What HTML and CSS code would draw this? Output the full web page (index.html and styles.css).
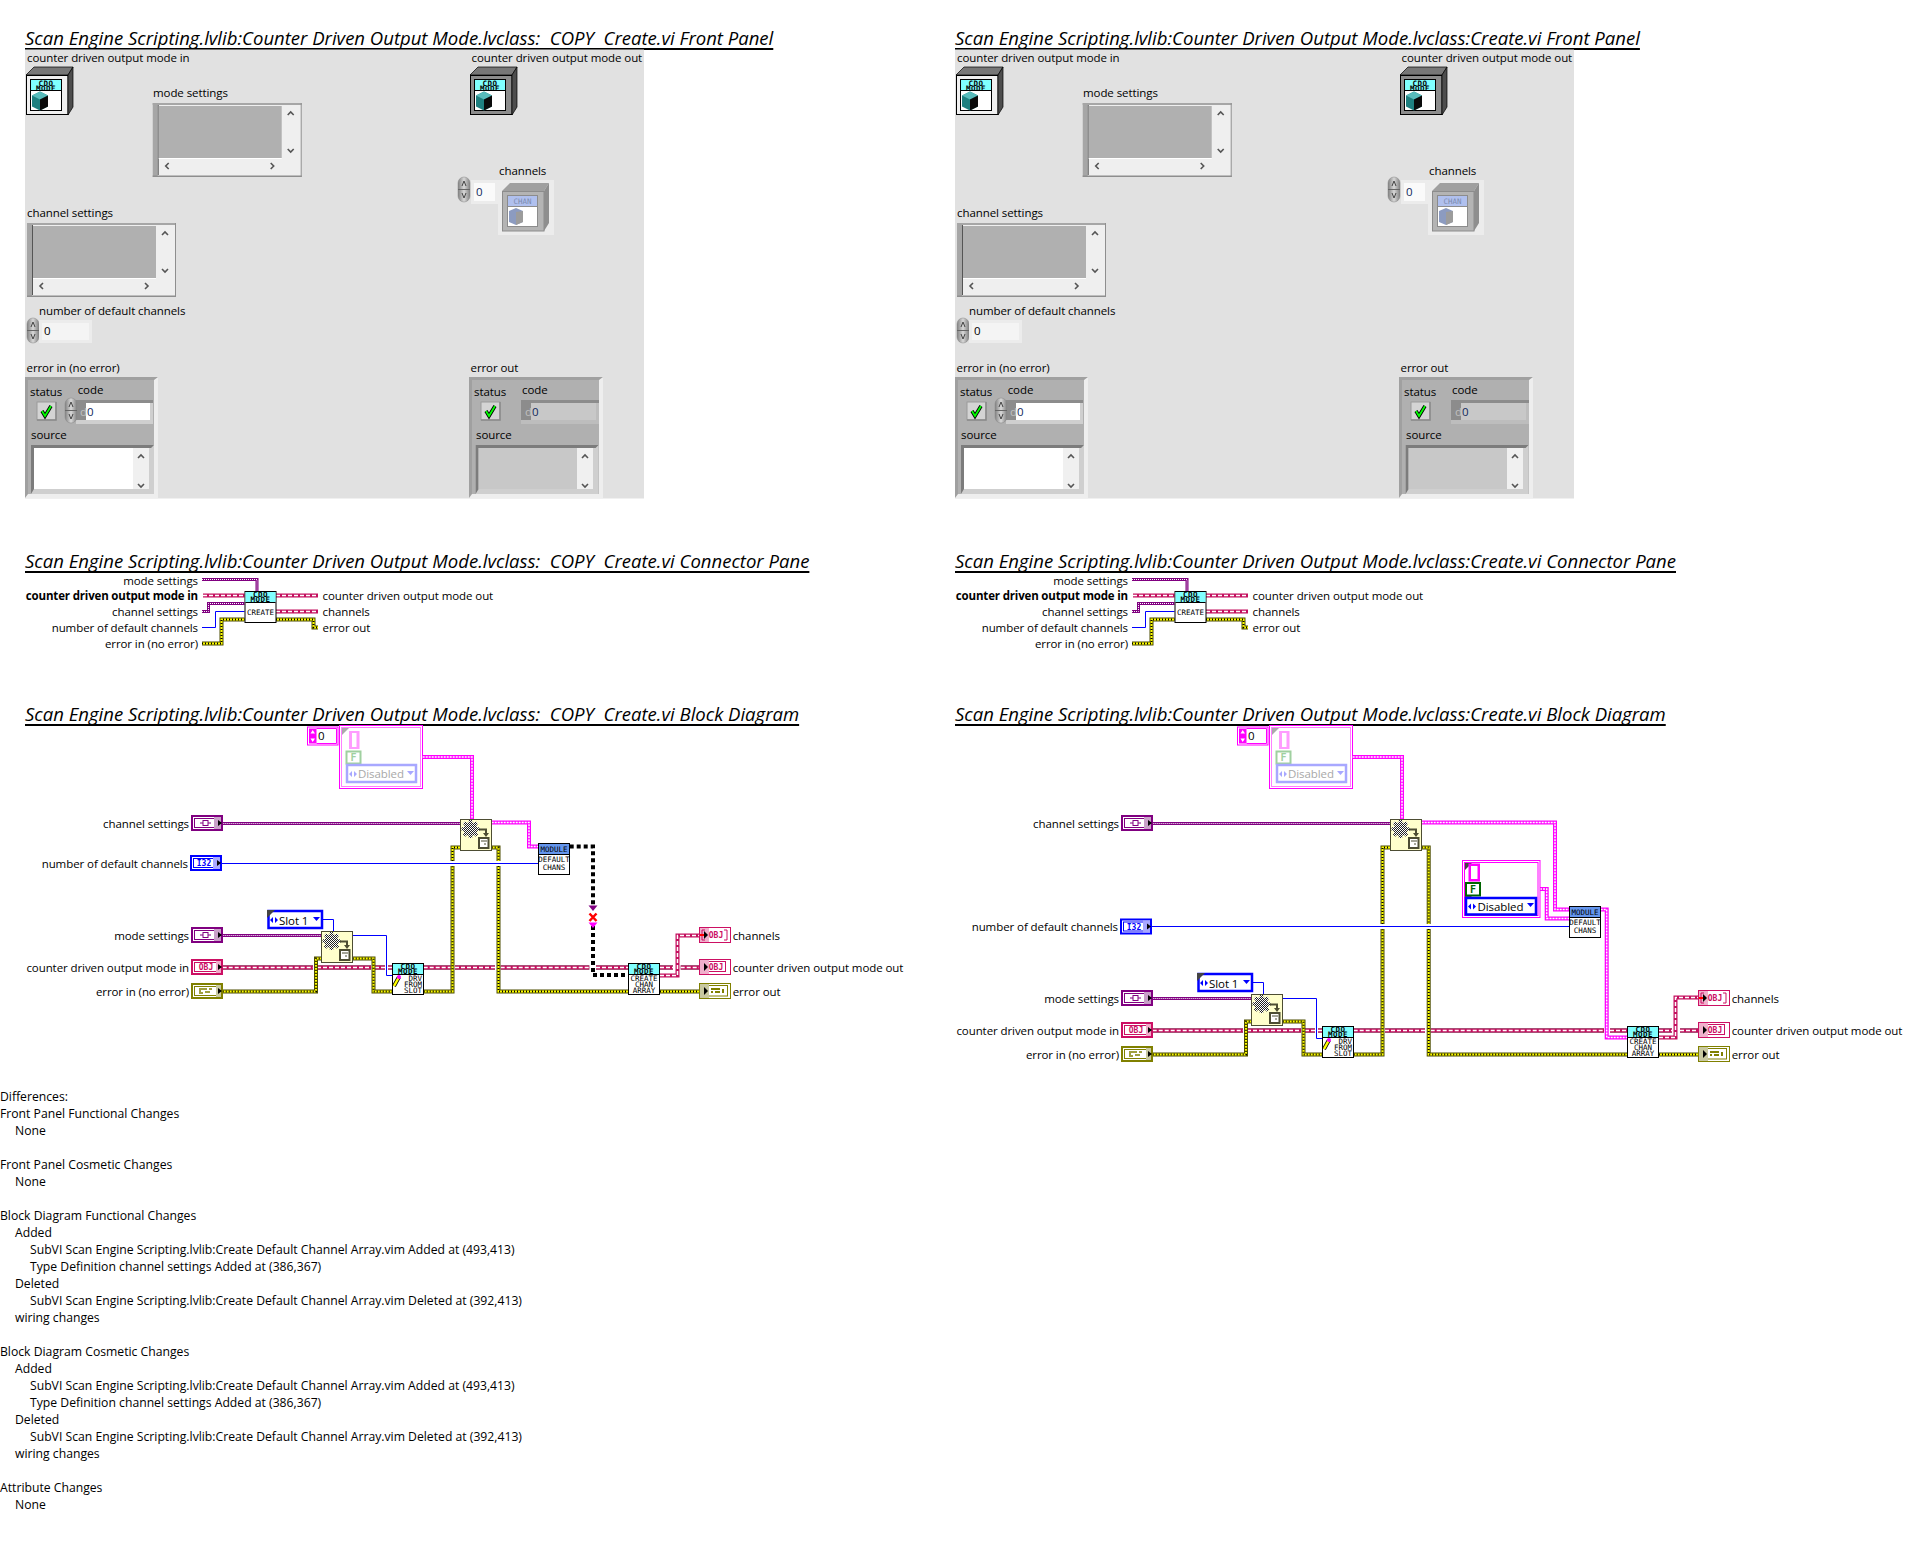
FILE: index.html
```html
<!DOCTYPE html>
<html lang="en">

<head>
    <meta charset="UTF-8">
    <title>VI Compare Report</title>
    <link rel="stylesheet" href="styles.css">
</head>

<body>
    <!-- Shared drawings for icons, terminals and the front panel -->
    <svg class="sprites" aria-hidden="true">
        <defs>
            <pattern id="checker" width="2" height="2" patternUnits="userSpaceOnUse">
                <rect width="2" height="2" fill="#fff" />
                <rect width="1" height="1" fill="#222" />
                <rect x="1" y="1" width="1" height="1" fill="#222" />
            </pattern>
            <linearGradient id="spin" x1="0" x2="1" y1="0" y2="0">
                <stop offset="0" stop-color="#808080" />
                <stop offset="0.5" stop-color="#d8d8d8" />
                <stop offset="1" stop-color="#808080" />
            </linearGradient>

            <g id="chev-up"><path class="chev" d="M-3 2L0 -1L3 2" /></g>
            <g id="chev-down"><path class="chev" d="M-3 -2L0 1L3 -2" /></g>
            <g id="chev-left"><path class="chev" d="M2 -3L-1 0L2 3" /></g>
            <g id="chev-right"><path class="chev" d="M-2 -3L1 0L-2 3" /></g>

            <!-- scrolling listbox with nothing in it -->
            <g id="listbox">
                <rect width="149" height="74" fill="#efefef" />
                <rect width="149" height="2" fill="#a6a6a6" />
                <rect width="5" height="74" fill="#a6a6a6" />
                <rect x="148" width="1" height="74" fill="#8e8e8e" />
                <rect y="72.500" width="149" height="1.500" fill="#8e8e8e" />
                <rect x="5" y="2" width="1" height="70" fill="#555" />
                <rect x="6" y="3" width="123" height="52" fill="#b0b0b0" />
                <rect x="6" y="55" width="123" height="1" fill="#fff" />
                <use href="#chev-up" x="138" y="10" />
                <use href="#chev-down" x="138" y="48" />
                <use href="#chev-left" x="14" y="63" />
                <use href="#chev-right" x="120" y="63" />
            </g>

            <g id="spinner">
                <rect width="12" height="25" rx="6" fill="url(#spin)" stroke="#888" stroke-width="0.500" />
                <path d="M0 12.500H12" stroke="#666" />
                <path d="M6 4L4 9M6 4L8 9M6 21L4 16M6 21L8 16" stroke="#444" fill="none" />
            </g>

            <g id="check-btn">
                <rect width="19" height="18" fill="#d4d4d4" stroke="#9a9a9a" />
                <path d="M0 18H19V0" fill="none" stroke="#8a8a8a" stroke-width="1.500" />
                <path d="M5 9L8 14L14 4" fill="none" stroke="#000" stroke-width="3.500" />
                <path d="M5 9L8 14L14 4" fill="none" stroke="#0f0" stroke-width="1.800" />
            </g>

            <g id="cube">
                <path d="M0 4L8 0L16 4V15L8 19L0 15Z" fill="#1e8080" />
                <path d="M0 4L8 0L16 4L8 8Z" fill="#58bcbc" />
                <path d="M8 8L16 4V15L8 19Z" fill="#0a0a0a" />
            </g>

            <!-- class control on the panel, 47 x 48 -->
            <g id="class-box">
                <path d="M0 8L8 0H47L42 8Z" fill="#777" stroke="#000" stroke-width="0.700" />
                <path d="M42 8L47 0V40L42 48Z" fill="#4d4d4d" stroke="#000" stroke-width="0.700" />
                <rect x="4.500" y="12.500" width="31" height="31" fill="#fff" stroke="#000" />
                <rect x="5" y="13" width="30" height="10" fill="#80ffff" />
                <path d="M5 23.500H35" stroke="#000" />
                <text class="pix pix-head" x="20" y="18.500" text-anchor="middle">CDO</text>
                <text class="pix pix-head" x="20" y="23.500" text-anchor="middle">MODE</text>
                <use href="#cube" x="6" y="24.500" />
            </g>

            <!-- everything on the panel except its labels -->
            <g id="panel-art">
                <rect x="25" y="49.500" width="619" height="449" fill="#e1e1e1" />

                <g transform="translate(26 67)">
                    <rect x="0.500" y="8.500" width="41.500" height="39" fill="#f0f0f0" stroke="#000" />
                    <use href="#class-box" />
                </g>
                <g transform="translate(470 67)">
                    <rect x="0.500" y="8.500" width="41.500" height="39" fill="#8c8c8c" stroke="#000" />
                    <use href="#class-box" />
                </g>

                <use href="#listbox" x="152.700" y="103" />
                <use href="#listbox" x="27" y="223" />

                <use href="#spinner" x="27" y="318" />
                <rect x="39" y="320" width="53" height="23" fill="#ececec" />
                <rect x="42" y="323" width="47" height="17" fill="#f4f4f4" />

                <!-- channels array -->
                <use href="#spinner" x="458" y="177" />
                <rect x="471" y="180" width="27" height="24" fill="#ececec" />
                <rect x="474" y="183" width="21" height="18" fill="#fafafa" />
                <rect x="498" y="180" width="56" height="55" fill="#ececec" />
                <g transform="translate(502 183)">
                    <rect x="0.500" y="8.500" width="41.500" height="39.500" fill="#b4b4b4" stroke="#8c8c8c" />
                    <path d="M0 8L8 0H47L42 8Z" fill="#a0a0a0" />
                    <path d="M42 8L47 0V40L42 48Z" fill="#8e8e8e" />
                    <rect x="5.500" y="12.500" width="30" height="31" fill="#fff" stroke="#8c8c8c" />
                    <rect x="6" y="13" width="29" height="10" fill="#b0c0ee" />
                    <path d="M6 23.500H35" stroke="#8c8c8c" />
                    <text class="pix pix-ghost" x="20.500" y="20.500" text-anchor="middle">CHAN</text>
                    <path d="M7 28L14 25L21 28V39L14 42L7 39Z" fill="#8c9bc0" />
                    <path d="M14 29L21 28V39L14 42Z" fill="#9c9c9c" />
                </g>

                <!-- error in cluster -->
                <rect x="25" y="377" width="133" height="121" fill="#eeeeee" />
                <rect x="25" y="377" width="129" height="117" fill="#b0b0b0" />
                <path d="M25 377H158L154 380H28V494L25 498Z" fill="#a0a0a0" />
                <use href="#check-btn" x="37" y="402" />
                <rect x="76" y="400" width="77" height="24" fill="#cfcfcf" />
                <rect x="76" y="400" width="77" height="3" fill="#8c8c8c" />
                <rect x="76" y="400" width="10" height="20" fill="#8c8c8c" />
                <rect x="86" y="403" width="64" height="17" fill="#fff" />
                <use href="#spinner" x="65" y="398" />
                <rect x="31" y="445" width="123" height="49" fill="#cfcfcf" />
                <path d="M31 445H154L151 448H34V489L31 494Z" fill="#7c7c7c" />
                <rect x="34" y="448" width="99" height="41" fill="#fff" />
                <rect x="133" y="448" width="16" height="41" fill="#f0f0f0" />
                <use href="#chev-up" x="141" y="456" />
                <use href="#chev-down" x="141" y="486" />

                <!-- error out cluster -->
                <rect x="469" y="377" width="134" height="121" fill="#eeeeee" />
                <rect x="469" y="377" width="130" height="117" fill="#b0b0b0" />
                <path d="M469 377H603L599 380H472V494L469 498Z" fill="#a0a0a0" />
                <use href="#check-btn" x="481" y="402" />
                <rect x="521" y="400" width="78" height="24" fill="#bdbdbd" />
                <rect x="521" y="400" width="78" height="3" fill="#8c8c8c" />
                <rect x="521" y="400" width="10" height="20" fill="#8c8c8c" />
                <rect x="531" y="403" width="65" height="17" fill="#c8c8c8" />
                <rect x="475.600" y="445" width="123" height="49" fill="#cfcfcf" />
                <path d="M475.600 445H598.600L595.600 448H478.600V489L475.600 494Z" fill="#7c7c7c" />
                <rect x="478.600" y="448" width="98.400" height="41" fill="#c8c8c8" />
                <rect x="577" y="448" width="16" height="41" fill="#f0f0f0" />
                <use href="#chev-up" x="585" y="456" />
                <use href="#chev-down" x="585" y="486" />
            </g>

            <!-- connector pane wires and icon -->
            <g id="pane-art">
                <path class="purple-base" d="M202 579.500H257V591M202 611.500H208.500V603.500H244.500" />
                <path class="purple-core" d="M202 579.500H257V591M202 611.500H208.500V603.500H244.500" />
                <path class="pink-base" d="M203 595.500H244.500M276 595.500H318M276 611.500H318" />
                <path class="pink-core" d="M203 595.500H244.500M276 595.500H318M276 611.500H318" />
                <path class="blue-wire" d="M202 627.500H215.500V611.500H244.500" />
                <path class="yellow-base" d="M202 643.500H221.500V619.500H244.500M276 619.500H313.500V627.500H318" />
                <path class="yellow-core" d="M202 643.500H221.500V619.500H244.500M276 619.500H313.500V627.500H318" />
                <path class="yellow-dots" d="M202 643.500H221.500V619.500H244.500M276 619.500H313.500V627.500H318" />
                <g transform="translate(244.500 591)">
                    <use href="#vi-cdo" />
                    <text class="pix" x="16" y="24" text-anchor="middle">CREATE</text>
                </g>
            </g>

            <!-- icon frames -->
            <g id="vi-cdo">
                <rect x="0.500" y="0.500" width="31" height="31" fill="#fff" stroke="#000" />
                <rect x="1" y="1" width="30" height="10" fill="#80ffff" />
                <path d="M1 11.500H31" stroke="#000" />
                <text class="pix pix-head" x="16" y="6" text-anchor="middle">CDO</text>
                <text class="pix pix-head" x="16" y="11" text-anchor="middle">MODE</text>
            </g>
            <g id="vi-module">
                <rect x="0.500" y="0.500" width="31" height="31" fill="#fff" stroke="#000" />
                <rect x="1" y="1" width="30" height="10" fill="#6495ed" />
                <path d="M1 11.500H31" stroke="#000" />
                <text class="pix" x="16" y="8.500" text-anchor="middle">MODULE</text>
                <text class="pix" x="16" y="19" text-anchor="middle">DEFAULT</text>
                <text class="pix" x="16" y="27" text-anchor="middle">CHANS</text>
            </g>
            <g id="vi-drv">
                <use href="#vi-cdo" />
                <text class="pix" x="30" y="17.700" text-anchor="end">DRV</text>
                <text class="pix" x="30" y="23.700" text-anchor="end">FROM</text>
                <text class="pix" x="30" y="29.700" text-anchor="end">SLOT</text>
                <path d="M2 23L7 14" stroke="#000" stroke-width="4" />
                <path d="M2 23L7 14" stroke="#ff0" stroke-width="2.500" />
                <circle cx="7" cy="14" r="2" fill="#f0f" />
            </g>
            <g id="vi-array">
                <use href="#vi-cdo" />
                <text class="pix" x="16" y="17.700" text-anchor="middle">CREATE</text>
                <text class="pix" x="16" y="23.700" text-anchor="middle">CHAN</text>
                <text class="pix" x="16" y="29.700" text-anchor="middle">ARRAY</text>
            </g>
            <g id="vi-gear">
                <rect x="0.500" y="0.500" width="31" height="31" fill="#ffffcc" stroke="#4d4d33" />
                <circle cx="10.500" cy="10" r="7" fill="url(#checker)" />
                <path d="M10.500 1V19M1.500 10H19.500M4 3.500L17 16.500M17 3.500L4 16.500" stroke="url(#checker)" stroke-width="3.500" />
                <path d="M19 10.500H26V15" fill="none" stroke="#4d4d33" stroke-width="2" />
                <path d="M23 14H29L26 18Z" fill="#4d4d33" />
                <rect x="19" y="19" width="9.500" height="10" fill="#fff" stroke="#4d4d33" stroke-width="2" />
                <path d="M21 22H27M24 25H26" stroke="#4d4d33" />
            </g>

            <!-- block diagram terminals, 32 x 16 -->
            <g id="term-arrow"><path d="M27 5L31 8L27 11Z" fill="#000" /></g>
            <g id="out-arrow"><path d="M5 4L9 8L5 12Z" fill="#000" /></g>

            <g id="t-cluster">
                <rect x="1" y="1" width="30" height="14" fill="#fff" stroke="#800080" stroke-width="2" />
                <rect x="3.500" y="3.500" width="25" height="9" fill="none" stroke="#800080" />
                <rect x="23" y="2" width="7" height="12" fill="#c8a0c8" />
                <path d="M9 8H20" stroke="#800080" />
                <rect x="12" y="5.500" width="5" height="5" fill="#fff" stroke="#800080" />
                <use href="#term-arrow" />
            </g>
            <g id="t-i32">
                <rect x="1" y="1" width="30" height="14" fill="#fff" stroke="#0000ff" stroke-width="2" />
                <rect x="3.500" y="3.500" width="25" height="9" fill="none" stroke="#0000ff" />
                <rect x="23" y="2" width="7" height="12" fill="#a8a8ff" />
                <text class="term-text term-blue" x="14" y="11">I32</text>
                <use href="#term-arrow" />
            </g>
            <g id="t-obj">
                <rect x="1" y="1" width="30" height="14" fill="#fff" stroke="#cc0f63" stroke-width="2" />
                <rect x="3.500" y="3.500" width="25" height="9" fill="none" stroke="#cc0f63" />
                <rect x="25" y="2" width="5" height="12" fill="#f0a8c8" />
                <text class="term-text term-pink" x="15" y="11">OBJ</text>
                <use href="#term-arrow" />
            </g>
            <g id="t-err">
                <rect x="1" y="1" width="30" height="14" fill="#fff" stroke="#808000" stroke-width="2" />
                <rect x="3.500" y="3.500" width="25" height="9" fill="none" stroke="#808000" />
                <rect x="25" y="2" width="5" height="12" fill="#c8c8a0" />
                <path d="M8 6H16M8 8H10M8 10H12M14 9H19M18 6H21" stroke="#808000" stroke-width="1.500" />
                <use href="#term-arrow" />
            </g>
            <g id="o-obj">
                <rect x="0.500" y="0.500" width="31" height="15" fill="#fff" stroke="#cc0f63" />
                <rect x="2.500" y="2.500" width="24" height="10" fill="none" stroke="#cc0f63" />
                <rect x="1" y="1" width="9" height="14" fill="#f0b0cc" />
                <text class="term-text term-pink" x="17" y="11">OBJ</text>
                <use href="#out-arrow" />
            </g>
            <g id="o-arr">
                <rect x="0.500" y="0.500" width="31" height="15" fill="#fff" stroke="#cc0f63" />
                <rect x="1" y="1" width="9" height="14" fill="#f0b0cc" />
                <path d="M6 3H3V13H6M25 3H28V13H25" fill="none" stroke="#cc0f63" />
                <text class="term-text term-pink" x="17" y="11">OBJ</text>
                <use href="#out-arrow" />
                <path d="M1 8H5" stroke="#f00" stroke-width="2" />
            </g>
            <g id="o-err">
                <rect x="0.500" y="0.500" width="31" height="15" fill="#fff" stroke="#808000" />
                <rect x="2.500" y="2.500" width="26" height="10.500" fill="none" stroke="#808000" />
                <rect x="1" y="1" width="9" height="14" fill="#c8c8a0" />
                <path d="M12 6H21M12 9H14M16 9H21M24 6V10" stroke="#808000" stroke-width="2" />
                <use href="#out-arrow" />
            </g>

            <g id="enum-arrows">
                <path d="M3 0L0 3L3 6ZM5 0L8 3L5 6Z" />
            </g>

            <!-- the default channel constant and cluster, dimmed -->
            <g id="ghost-art">
                <rect x="307.500" y="727" width="30.500" height="18" fill="#fff" stroke="#f0f" />
                <rect x="309" y="728.500" width="7.500" height="15" fill="#f0f" />
                <path d="M312.700 730L310.500 733.500H315ZM312.700 742L310.500 738.500H315Z" fill="#fff" />
                <path d="M316.500 728.500H336.500V743.500H316.500" fill="none" stroke="#f0f" />
                <rect x="339.500" y="725.500" width="83" height="63" fill="#fff" stroke="#f0f" />
                <rect x="341.500" y="727.500" width="79" height="59" fill="#fff" stroke="#ff80ff" />
                <path d="M342 728H349L342 735Z" fill="#aaa" />
                <rect x="349" y="731" width="10.500" height="18" fill="#ff9cff" />
                <rect x="352" y="733" width="4.500" height="14" fill="#fff" />
                <rect x="346.500" y="751.500" width="14" height="12" fill="#fff" stroke="#a0d0a0" stroke-width="2" />
                <path d="M346 764H353L346 771Z" fill="#aaa" />
                <rect x="347" y="765" width="69" height="17" fill="#fff" stroke="#a8a8ff" stroke-width="2.500" />
                <use class="ghost-arrows" href="#enum-arrows" x="349" y="771" />
                <path d="M407 771H414L410.500 775Z" fill="#a8a8ff" />
            </g>
        </defs>
    </svg>

    <div class="compare">
        <!-- Left VI -->
        <div class="column">
            <section class="pane">
                <h2 class="pane-title">Scan Engine Scripting.lvlib:Counter Driven Output Mode.lvclass:  COPY  Create.vi Front Panel</h2>
                <svg class="front-panel" viewBox="25 49 620 450">
                    <use href="#panel-art" />
                    <text class="lbl" x="27" y="62">counter driven output mode in</text>
                    <text class="lbl" x="153" y="97">mode settings</text>
                    <text class="lbl" x="27" y="217">channel settings</text>
                    <text class="lbl" x="39" y="315">number of default channels</text>
                    <text class="lbl" x="44" y="335">0</text>
                    <text class="lbl" x="26.500" y="372">error in (no error)</text>
                    <text class="lbl" x="30" y="396">status</text>
                    <text class="lbl" x="77.700" y="394">code</text>
                    <text class="lbl" x="31" y="439">source</text>
                    <text class="lbl lbl-dim" x="80" y="416">d</text>
                    <text class="lbl lbl-num" x="87" y="416">0</text>
                    <text class="lbl" x="471.500" y="62">counter driven output mode out</text>
                    <text class="lbl" x="499" y="175">channels</text>
                    <text class="lbl lbl-num" x="476" y="196">0</text>
                    <text class="lbl" x="470.500" y="372">error out</text>
                    <text class="lbl" x="474" y="396">status</text>
                    <text class="lbl" x="522" y="394">code</text>
                    <text class="lbl" x="476" y="439">source</text>
                    <text class="lbl lbl-dim" x="525" y="416">d</text>
                    <text class="lbl lbl-num" x="532" y="416">0</text>
                </svg>
            </section>

            <section class="pane">
                <h2 class="pane-title">Scan Engine Scripting.lvlib:Counter Driven Output Mode.lvclass:  COPY  Create.vi Connector Pane</h2>
                <svg class="connector" viewBox="25 572 620 80">
                    <use href="#pane-art" />
                    <text class="lbl end" x="198" y="584.500">mode settings</text>
                    <text class="lbl end lbl-bold" x="198" y="600">counter driven output mode in</text>
                    <text class="lbl end" x="198" y="616">channel settings</text>
                    <text class="lbl end" x="198" y="632">number of default channels</text>
                    <text class="lbl end" x="198" y="648">error in (no error)</text>
                    <text class="lbl" x="322.500" y="600">counter driven output mode out</text>
                    <text class="lbl" x="322.500" y="616">channels</text>
                    <text class="lbl" x="322.500" y="632">error out</text>
                </svg>
            </section>

            <section class="pane">
                <h2 class="pane-title">Scan Engine Scripting.lvlib:Counter Driven Output Mode.lvclass:  COPY  Create.vi Block Diagram</h2>
                <svg class="diagram" viewBox="25 725 905 363">
                    <use href="#ghost-art" />
                    <text class="lbl" x="318" y="740">0</text>
                    <text class="lbl lbl-ghost" x="358" y="778">Disabled</text>
                    <text class="pix pix-green" x="350.500" y="761">F</text>

                    <path class="purple-base" d="M222.700 823.500H460M222.700 935.500H321" />
                    <path class="purple-core" d="M222.700 823.500H460M222.700 935.500H321" />
                    <path class="pink-shadow" d="M222.700 967.500H313M317 967.500H371M375 967.500H385M388 967.500H392M423.700 967.500H450.700M455 967.500H495M500.700 967.500H589.300M596 967.500H628M660 967.500H673M680.700 967.500H699.300" />
                    <path class="pink-base" d="M222.700 967.500H313M317 967.500H371M375 967.500H385M388 967.500H392M423.700 967.500H450.700M455 967.500H495M500.700 967.500H589.300M596 967.500H628M660 967.500H673M680.700 967.500H699.300M660 975.500H677.500V935.500H699.300" />
                    <path class="pink-core" d="M222.700 967.500H313M317 967.500H371M375 967.500H385M388 967.500H392M423.700 967.500H450.700M455 967.500H495M500.700 967.500H589.300M596 967.500H628M660 967.500H673M680.700 967.500H699.300M660 975.500H677.500V935.500H699.300" />
                    <path class="yellow-base" d="M222.700 991.500H316V958.500H321M352.700 958.500H373.500V991.500H392M423.700 991.500H452.500V866M452.500 861V847.500H460M491.700 847.500H498.500V861M498.500 866V991.500H628M660 991.500H699.300" />
                    <path class="yellow-core" d="M222.700 991.500H316V958.500H321M352.700 958.500H373.500V991.500H392M423.700 991.500H452.500V866M452.500 861V847.500H460M491.700 847.500H498.500V861M498.500 866V991.500H628M660 991.500H699.300" />
                    <path class="yellow-dots" d="M222.700 991.500H316V958.500H321M352.700 958.500H373.500V991.500H392M423.700 991.500H452.500V866M452.500 861V847.500H460M491.700 847.500H498.500V861M498.500 866V991.500H628M660 991.500H699.300" />
                    <path class="blue-wire" d="M222 863.500H538.500M322 919.500H333.500V931M352.700 935.500H386.500V975.500H392" />
                    <path class="magenta-base" d="M422.700 757H472V819M491.700 822.500H529V846.500H538.300" />
                    <path class="magenta-core" d="M422.700 757H472V819M491.700 822.500H529V846.500H538.300" />
                    <path class="broken-wire" d="M569.700 846.500H593V908M593 926V975H628" />
                    <path d="M588.500 905.500H597.500L593 911Z" fill="#800080" />
                    <path d="M588.500 922.500H597.500L593 928Z" fill="#f0f" />
                    <path class="break-x" d="M589.500 913.500L596.500 921M596.500 913.500L589.500 921" />

                    <use href="#t-cluster" x="191" y="815" />
                    <use href="#t-i32" x="190" y="855" />
                    <use href="#t-cluster" x="191" y="927" />
                    <use href="#t-obj" x="191" y="959" />
                    <use href="#t-err" x="191" y="983" />
                    <use href="#o-arr" x="699" y="927" />
                    <use href="#o-obj" x="699" y="959" />
                    <use href="#o-err" x="699" y="983" />

                    <use href="#vi-gear" x="460" y="819" />
                    <use href="#vi-gear" x="321" y="931" />
                    <use href="#vi-drv" x="392" y="963" />
                    <use href="#vi-module" x="538" y="843" />
                    <use href="#vi-array" x="628" y="963" />

                    <rect class="enum-box" x="268.500" y="911" width="53.500" height="17" />
                    <path d="M267 910H275L267 918Z" fill="#444" />
                    <use class="blue-arrows" href="#enum-arrows" x="270" y="917" />
                    <path d="M313 917H320L316.500 921Z" fill="#00f" />
                    <text class="lbl" x="279" y="924.500">Slot 1</text>

                    <text class="lbl end" x="189" y="828">channel settings</text>
                    <text class="lbl end" x="188" y="868">number of default channels</text>
                    <text class="lbl end" x="189" y="940">mode settings</text>
                    <text class="lbl end" x="189" y="972">counter driven output mode in</text>
                    <text class="lbl end" x="189" y="996">error in (no error)</text>
                    <text class="lbl" x="732.700" y="940">channels</text>
                    <text class="lbl" x="732.700" y="972">counter driven output mode out</text>
                    <text class="lbl" x="732.700" y="996">error out</text>
                </svg>
            </section>
        </div>

        <!-- Right VI -->
        <div class="column">
            <section class="pane">
                <h2 class="pane-title">Scan Engine Scripting.lvlib:Counter Driven Output Mode.lvclass:Create.vi Front Panel</h2>
                <svg class="front-panel" viewBox="25 49 620 450">
                    <use href="#panel-art" />
                    <text class="lbl" x="27" y="62">counter driven output mode in</text>
                    <text class="lbl" x="153" y="97">mode settings</text>
                    <text class="lbl" x="27" y="217">channel settings</text>
                    <text class="lbl" x="39" y="315">number of default channels</text>
                    <text class="lbl" x="44" y="335">0</text>
                    <text class="lbl" x="26.500" y="372">error in (no error)</text>
                    <text class="lbl" x="30" y="396">status</text>
                    <text class="lbl" x="77.700" y="394">code</text>
                    <text class="lbl" x="31" y="439">source</text>
                    <text class="lbl lbl-dim" x="80" y="416">d</text>
                    <text class="lbl lbl-num" x="87" y="416">0</text>
                    <text class="lbl" x="471.500" y="62">counter driven output mode out</text>
                    <text class="lbl" x="499" y="175">channels</text>
                    <text class="lbl lbl-num" x="476" y="196">0</text>
                    <text class="lbl" x="470.500" y="372">error out</text>
                    <text class="lbl" x="474" y="396">status</text>
                    <text class="lbl" x="522" y="394">code</text>
                    <text class="lbl" x="476" y="439">source</text>
                    <text class="lbl lbl-dim" x="525" y="416">d</text>
                    <text class="lbl lbl-num" x="532" y="416">0</text>
                </svg>
            </section>

            <section class="pane">
                <h2 class="pane-title">Scan Engine Scripting.lvlib:Counter Driven Output Mode.lvclass:Create.vi Connector Pane</h2>
                <svg class="connector" viewBox="25 572 620 80">
                    <use href="#pane-art" />
                    <text class="lbl end" x="198" y="584.500">mode settings</text>
                    <text class="lbl end lbl-bold" x="198" y="600">counter driven output mode in</text>
                    <text class="lbl end" x="198" y="616">channel settings</text>
                    <text class="lbl end" x="198" y="632">number of default channels</text>
                    <text class="lbl end" x="198" y="648">error in (no error)</text>
                    <text class="lbl" x="322.500" y="600">counter driven output mode out</text>
                    <text class="lbl" x="322.500" y="616">channels</text>
                    <text class="lbl" x="322.500" y="632">error out</text>
                </svg>
            </section>

            <section class="pane">
                <h2 class="pane-title">Scan Engine Scripting.lvlib:Counter Driven Output Mode.lvclass:Create.vi Block Diagram</h2>
                <svg class="diagram diagram-wide" viewBox="25 725 974 363">
                    <use href="#ghost-art" />
                    <text class="lbl" x="318" y="740">0</text>
                    <text class="lbl lbl-ghost" x="358" y="778">Disabled</text>
                    <text class="pix pix-green" x="350.500" y="761">F</text>

                    <path class="purple-base" d="M222.700 823.500H460M222.700 998.500H321" />
                    <path class="purple-core" d="M222.700 823.500H460M222.700 998.500H321" />
                    <path class="pink-shadow" d="M222.700 1030.500H313M317 1030.500H371M375 1030.500H385M388 1030.500H392M423.700 1030.500H450.700M455 1030.500H495M500.700 1030.500H674M680 1030.500H697.300M729 1030.500H742M750 1030.500H768.300" />
                    <path class="pink-base" d="M222.700 1030.500H313M317 1030.500H371M375 1030.500H385M388 1030.500H392M423.700 1030.500H450.700M455 1030.500H495M500.700 1030.500H674M680 1030.500H697.300M729 1030.500H742M750 1030.500H768.300M729 1037.500H745.500V997.500H768.300" />
                    <path class="pink-core" d="M222.700 1030.500H313M317 1030.500H371M375 1030.500H385M388 1030.500H392M423.700 1030.500H450.700M455 1030.500H495M500.700 1030.500H674M680 1030.500H697.300M729 1030.500H742M750 1030.500H768.300M729 1037.500H745.500V997.500H768.300" />
                    <path class="yellow-base" d="M222.700 1054.500H316V1021.500H321M352.700 1021.500H373.500V1054.500H392M423.700 1054.500H452.500V929M452.500 924V847.500H460M491.700 847.500H498.700V924M498.700 929V1054.500H697.300M729 1054.500H768.300" />
                    <path class="yellow-core" d="M222.700 1054.500H316V1021.500H321M352.700 1021.500H373.500V1054.500H392M423.700 1054.500H452.500V929M452.500 924V847.500H460M491.700 847.500H498.700V924M498.700 929V1054.500H697.300M729 1054.500H768.300" />
                    <path class="yellow-dots" d="M222.700 1054.500H316V1021.500H321M352.700 1021.500H373.500V1054.500H392M423.700 1054.500H452.500V929M452.500 924V847.500H460M491.700 847.500H498.700V924M498.700 929V1054.500H697.300M729 1054.500H768.300" />
                    <path class="blue-wire" d="M222 926.500H639.300M322 982.500H333.500V994M352.700 998.500H386.500V1038.500H392" />
                    <path class="magenta-base" d="M422.700 757H472V819M491.700 822.500H625V909.500H639.300M610 889H616.700V918.500H639.300M670.700 909.500H676.700V1037.500H697.300" />
                    <path class="magenta-core" d="M422.700 757H472V819M491.700 822.500H625V909.500H639.300M610 889H616.700V918.500H639.300M670.700 909.500H676.700V1037.500H697.300" />

                    <!-- second copy of the cluster, at full strength -->
                    <rect x="532.500" y="860.500" width="77.500" height="57" fill="#fff" stroke="#f0f" />
                    <rect x="534.500" y="862.500" width="73.500" height="53" fill="#fff" stroke="#f0f" />
                    <path d="M535 863H542L535 870Z" fill="#444" />
                    <rect x="538.500" y="863.500" width="11.500" height="18" fill="#f0f" />
                    <rect x="541" y="866" width="6.500" height="13" fill="#fff" />
                    <rect x="536" y="883" width="14" height="12.500" fill="#fff" stroke="#006400" stroke-width="2" />
                    <path d="M535 896H542L535 903Z" fill="#444" />
                    <rect x="536" y="898" width="70" height="16.500" fill="#fff" stroke="#00f" stroke-width="2.500" />
                    <use class="blue-arrows" href="#enum-arrows" x="538" y="903.500" />
                    <path d="M597 903H604L600.500 907Z" fill="#00f" />
                    <text class="pix pix-darkgreen" x="540" y="892.500">F</text>
                    <text class="lbl" x="547.500" y="911">Disabled</text>

                    <use href="#t-cluster" x="191" y="815" />
                    <use href="#t-i32" x="190" y="918.500" />
                    <use href="#t-cluster" x="191" y="990" />
                    <use href="#t-obj" x="191" y="1022" />
                    <use href="#t-err" x="191" y="1046" />
                    <use href="#o-arr" x="768" y="990" />
                    <use href="#o-obj" x="768" y="1022" />
                    <use href="#o-err" x="768" y="1046" />

                    <use href="#vi-gear" x="460" y="819" />
                    <use href="#vi-gear" x="321" y="994" />
                    <use href="#vi-drv" x="392" y="1026" />
                    <use href="#vi-module" x="639" y="906" />
                    <use href="#vi-array" x="697" y="1026" />

                    <rect class="enum-box" x="268.500" y="974" width="53.500" height="17" />
                    <path d="M267 973H275L267 981Z" fill="#444" />
                    <use class="blue-arrows" href="#enum-arrows" x="270" y="980" />
                    <path d="M313 980H320L316.500 984Z" fill="#00f" />
                    <text class="lbl" x="279" y="987.500">Slot 1</text>

                    <text class="lbl end" x="189" y="828">channel settings</text>
                    <text class="lbl end" x="188" y="931">number of default channels</text>
                    <text class="lbl end" x="189" y="1003">mode settings</text>
                    <text class="lbl end" x="189" y="1035">counter driven output mode in</text>
                    <text class="lbl end" x="189" y="1059">error in (no error)</text>
                    <text class="lbl" x="801.700" y="1003">channels</text>
                    <text class="lbl" x="801.700" y="1035">counter driven output mode out</text>
                    <text class="lbl" x="801.700" y="1059">error out</text>
                </svg>
            </section>
        </div>
    </div>

    <!-- Differences list -->
    <div class="notes">
        <p>Differences:</p>
        <div class="group">
            <p>Front Panel Functional Changes</p>
            <p class="lvl1">None</p>
        </div>
        <div class="group">
            <p>Front Panel Cosmetic Changes</p>
            <p class="lvl1">None</p>
        </div>
        <div class="group">
            <p>Block Diagram Functional Changes</p>
            <p class="lvl1">Added</p>
            <p class="lvl2">SubVI Scan Engine Scripting.lvlib:Create Default Channel Array.vim Added at (493,413)</p>
            <p class="lvl2">Type Definition channel settings Added at (386,367)</p>
            <p class="lvl1">Deleted</p>
            <p class="lvl2">SubVI Scan Engine Scripting.lvlib:Create Default Channel Array.vim Deleted at (392,413)</p>
            <p class="lvl1">wiring changes</p>
        </div>
        <div class="group">
            <p>Block Diagram Cosmetic Changes</p>
            <p class="lvl1">Added</p>
            <p class="lvl2">SubVI Scan Engine Scripting.lvlib:Create Default Channel Array.vim Added at (493,413)</p>
            <p class="lvl2">Type Definition channel settings Added at (386,367)</p>
            <p class="lvl1">Deleted</p>
            <p class="lvl2">SubVI Scan Engine Scripting.lvlib:Create Default Channel Array.vim Deleted at (392,413)</p>
            <p class="lvl1">wiring changes</p>
        </div>
        <div class="group">
            <p>Attribute Changes</p>
            <p class="lvl1">None</p>
        </div>
    </div>
</body>

</html>
```

FILE: styles.css
```css
/* Page */
body {
    margin: 0;
    background: #fff;
    color: #000;
    font-family: "Open Sans", "Noto Sans", sans-serif;
}

.sprites {
    display: block;
    width: 0;
    height: 0;
}

/* Two VIs side by side */
.compare {
    display: grid;
    grid-template-columns: 930px 1fr;
}

.column {
    padding: 27px 0 0 25px;
    min-width: 0;
}

.pane + .pane {
    margin-top: 51px;
}

.pane-title {
    margin: 0;
    height: 22px;
    line-height: 22px;
    font-size: 18.550px;
    font-weight: 400;
    font-style: italic;
    white-space: pre;
    text-decoration: underline;
    text-decoration-thickness: 2px;
    text-underline-offset: 3px;
    text-decoration-skip-ink: none;
}

.front-panel {
    display: block;
    width: 620px;
    height: 450px;
    overflow: visible;
}

.connector {
    display: block;
    width: 620px;
    height: 80px;
    overflow: visible;
}

.diagram {
    display: block;
    width: 905px;
    height: 363px;
    overflow: visible;
}

.diagram-wide {
    width: 974px;
}

/* Labels inside the drawings */
.lbl {
    font-size: 11.500px;
    letter-spacing: -0.080px;
    fill: #000;
}

.end {
    text-anchor: end;
}

.lbl-bold {
    font-weight: 700;
    letter-spacing: -0.170px;
}

.lbl-dim {
    fill: #c0c0c0;
}

.lbl-num {
    fill: #102a5a;
}

.lbl-ghost {
    fill: #a8a8a8;
}

/* Small type on the icons */
.pix {
    font-family: "DejaVu Sans Mono", monospace;
    font-size: 7.500px;
    fill: #000;
}

.pix-head {
    font-weight: 700;
    letter-spacing: 0.500px;
}

.pix-ghost {
    fill: #7c8cb0;
}

.pix-green {
    font-weight: 700;
    font-size: 10px;
    fill: #a0d0a0;
}

.pix-darkgreen {
    font-weight: 700;
    font-size: 10px;
    fill: #006400;
}

.term-text {
    font-family: "DejaVu Sans Mono", monospace;
    font-size: 8px;
    font-weight: 700;
    text-anchor: middle;
}

.term-blue {
    fill: #0000ff;
}

.term-pink {
    fill: #cc0f63;
}

/* Panel arrows */
.chev {
    fill: none;
    stroke: #555;
    stroke-width: 1.600;
}

/* Wires */
.purple-base,
.purple-core,
.pink-base,
.pink-core,
.pink-shadow,
.yellow-base,
.yellow-core,
.yellow-dots,
.magenta-base,
.magenta-core,
.blue-wire,
.broken-wire {
    fill: none;
}

.purple-base {
    stroke: #800080;
    stroke-width: 3;
}

.purple-core {
    stroke: #fff;
    stroke-width: 1;
    stroke-dasharray: 1 1;
}

.pink-shadow {
    stroke: #8c8c8c;
    stroke-width: 5;
}

.pink-base {
    stroke: #c40f5e;
    stroke-width: 4;
}

.pink-core {
    stroke: #fff;
    stroke-width: 1.500;
    stroke-dasharray: 4 2;
}

.yellow-base {
    stroke: #4d4d00;
    stroke-width: 4;
}

.yellow-core {
    stroke: #ffff00;
    stroke-width: 2;
}

.yellow-dots {
    stroke: #000;
    stroke-width: 2;
    stroke-dasharray: 1 2;
}

.magenta-base {
    stroke: #ff00ff;
    stroke-width: 4;
}

.magenta-core {
    stroke: #fff;
    stroke-width: 1.500;
    stroke-dasharray: 2 1;
}

.blue-wire {
    stroke: #0000ff;
    stroke-width: 1;
}

.broken-wire {
    stroke: #000;
    stroke-width: 4;
    stroke-dasharray: 4 3;
}

.break-x {
    fill: none;
    stroke: #f00;
    stroke-width: 2.500;
}

/* Enum constants */
.enum-box {
    fill: #fff;
    stroke: #0000ff;
    stroke-width: 2.500;
}

.blue-arrows {
    fill: #0000ff;
}

.ghost-arrows {
    fill: #a8a8ff;
}

/* Differences text */
.notes {
    font-size: 12.200px;
    line-height: 17px;
}

.notes p {
    margin: 0;
    white-space: pre;
}

.group {
    margin-bottom: 17px;
}

.lvl1 {
    padding-left: 15px;
}

.lvl2 {
    padding-left: 30px;
}
```
